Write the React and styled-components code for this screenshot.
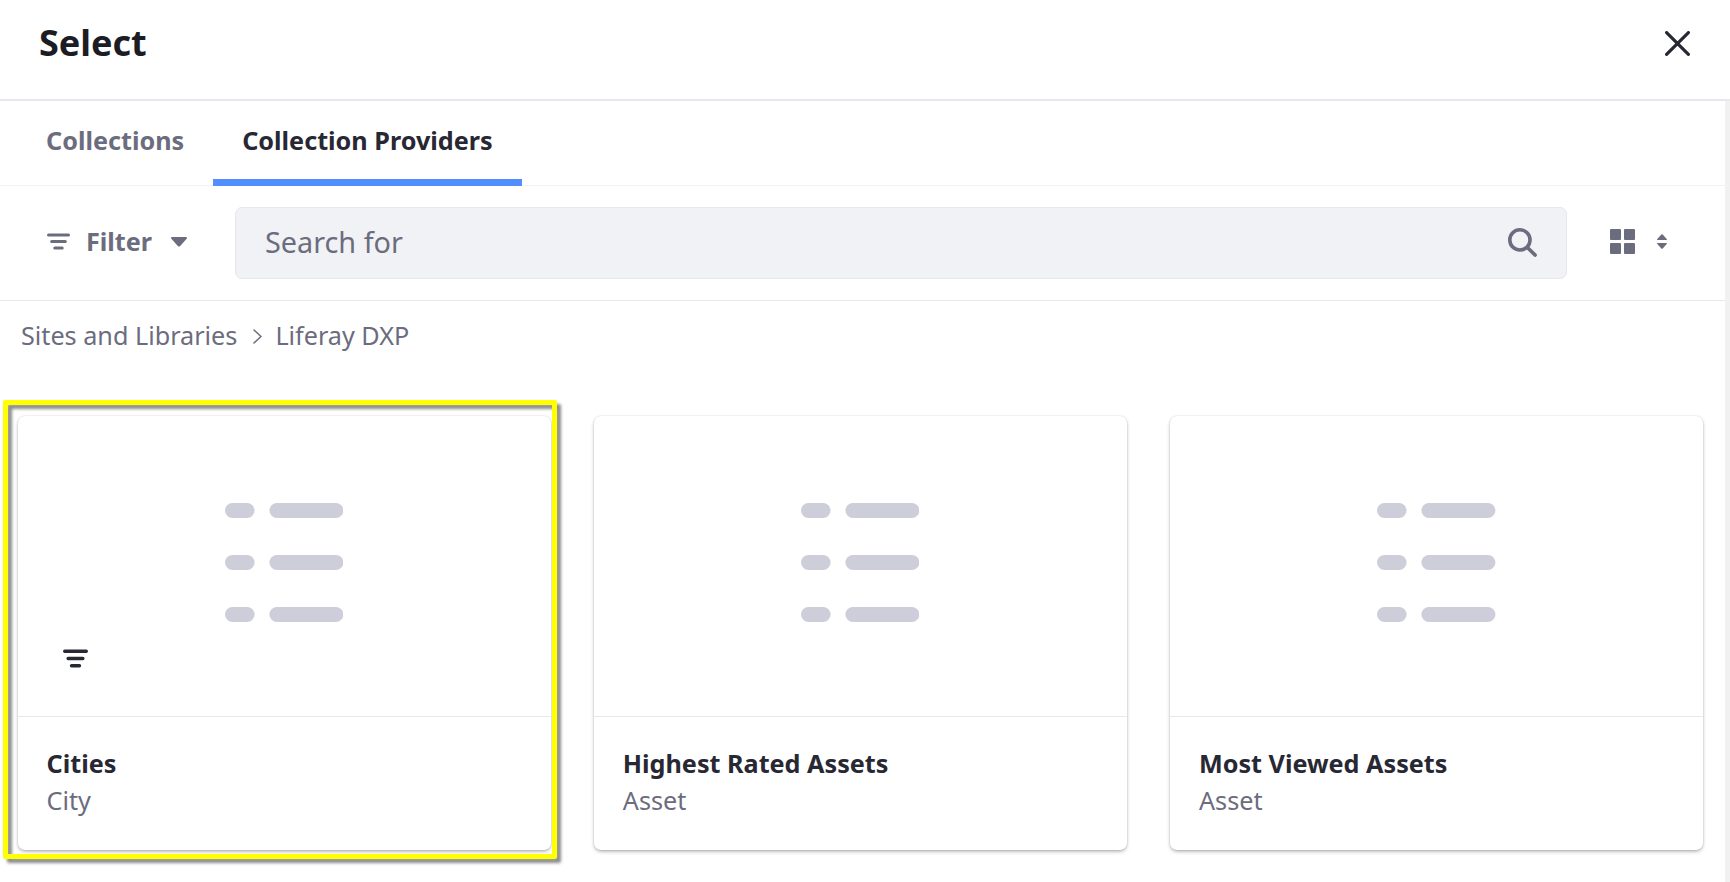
import React from "react";
import styled, { createGlobalStyle } from "styled-components";

const GlobalStyle = createGlobalStyle`
  * { box-sizing: border-box; }
  body { margin: 0; background: #fff; font-family: "Noto Sans", sans-serif; color: #272833; }
  svg { display: block; flex: none; }
`;

const Modal = styled.div`
  height: 882px;
  display: flex;
  flex-direction: column;
  overflow: hidden;
`;
const Header = styled.header`
  height: 101px;
  flex: none;
  display: flex;
  justify-content: space-between;
  padding: 0 40px 12px 39px;
  align-items: center;
  border-bottom: 2px solid #e7e7ed;
`;
const Title = styled.h1`
  margin: 0;
  padding-bottom: 2px;
  font-size: 36px;
  line-height: 48px;
  font-weight: 700;
  color: #1c1c24;
`;
const IconButton = styled.button`
  display: flex;
  align-items: center;
  padding: 0;
  border: 0;
  background: none;
  color: ${(p) => p.$color || "#6b6c7e"};
`;
const Body = styled.div`
  flex: 1;
  display: flex;
`;
const Content = styled.main`
  flex: 1;
  min-width: 0;
`;
const ScrollTrack = styled.div`
  width: 5px;
  background: #f1f1f1;
`;
const Tabs = styled.nav`
  display: flex;
  height: 85px;
  padding-left: 17px;
  border-bottom: 1px solid #f1f2f5;
`;
const Tab = styled.a`
  height: 85px;
  padding: 21px 29px 0;
  font-size: 25.2px;
  line-height: 36px;
  font-weight: 700;
  white-space: nowrap;
  color: ${(p) => (p.$active ? "#272833" : "#6b6c7e")};
  border-bottom: 7px solid ${(p) => (p.$active ? "#528eff" : "transparent")};
`;
const Toolbar = styled.div`
  display: flex;
  align-items: center;
  height: 115px;
  padding: 0 58px 0 47px;
  border-bottom: 1px solid #e7e7ed;
`;
const FilterButton = styled.button`
  display: flex;
  align-items: center;
  width: 188px;
  padding: 0 0 3px;
  border: 0;
  background: none;
  color: #6b6c7e;
  font: 700 25.2px/36px "Noto Sans", sans-serif;
`;
const FilterLabel = styled.span`
  margin: -2px 19px 0 16px;
`;
const SearchBox = styled.div`
  flex: 1;
  height: 72px;
  display: flex;
  align-items: center;
  justify-content: space-between;
  padding: 0 29px 2px;
  border: 1px solid #e7e7ed;
  border-radius: 7px;
  background: #f1f2f5;
  color: #6b6c7e;
  font-size: 28.8px;
`;
const Placeholder = styled.span`
  padding-bottom: 2px;
`;
const ViewControls = styled.div`
  display: flex;
  align-items: center;
  gap: 22px;
  margin-left: 43px;
  padding-bottom: 3px;
`;
const Breadcrumb = styled.div`
  display: flex;
  align-items: center;
  height: 115px;
  padding: 0 0 47px 21px;
  font-size: 25.2px;
  color: #6b6c7e;
`;
const Separator = styled.span`
  margin: 2px 13px 0 16px;
`;
const Cards = styled.div`
  display: grid;
  grid-template-columns: repeat(3, 533px);
  gap: 43.2px;
  padding-left: 17.6px;
`;
const Card = styled.article`
  position: relative;
  height: 434px;
  border-radius: 7px;
  background: #fff;
  box-shadow: 0 2px 4px -1px rgba(0, 0, 0, 0.38), 0 0 2px rgba(0, 0, 0, 0.14);
`;
const Preview = styled.div`
  height: 301px;
  display: flex;
  align-items: center;
  justify-content: center;
  padding-bottom: 7px;
  border-bottom: 1px solid #e7e7ed;
`;
const Badge = styled.span`
  position: absolute;
  left: 45px;
  top: 233px;
  color: #272833;
`;
const Caption = styled.div`
  padding: 28px 29px 0;
  font-size: 25.2px;
  line-height: 37px;
  color: #6b6c7e;
`;
const CardTitle = styled.div`
  font-weight: 700;
  color: #272833;
`;
const Highlight = styled.div`
  position: absolute;
  inset: -16px -6px -9px -15px;
  border: 5px solid #ff0;
  border-radius: 2px;
  filter: drop-shadow(4px 4px 1.5px rgba(0, 0, 0, 0.45));
  pointer-events: none;
`;

const FilterIcon = ({ width, height }) => (
  <svg width={width} height={height} viewBox="0 0 22 17" preserveAspectRatio="none" stroke="currentColor" strokeWidth="3" strokeLinecap="round">
    <path d="M1.5 2h19M4.5 8.5h13M7.5 15h7" />
  </svg>
);

const ListIcon = () => (
  <svg width="118.4" height="119" viewBox="0 0 118.4 119" fill="#cdced9">
    {[0, 52, 104].map((y) => (
      <React.Fragment key={y}>
        <rect x="0" y={y} width="29.6" height="15" rx="7.5" />
        <rect x="44.4" y={y} width="74" height="15" rx="7.5" />
      </React.Fragment>
    ))}
  </svg>
);

const items = [
  { title: "Cities", type: "City", selected: true },
  { title: "Highest Rated Assets", type: "Asset" },
  { title: "Most Viewed Assets", type: "Asset" },
];

export default function App() {
  return (
    <Modal>
      <GlobalStyle />
      <Header>
        <Title>Select</Title>
        <IconButton $color="#272833" aria-label="Close">
          <svg width="25" height="25" viewBox="0 0 25 25" stroke="currentColor" strokeWidth="3.2" strokeLinecap="round">
            <path d="M1.6 1.6l21.8 21.8M23.4 1.6L1.6 23.4" />
          </svg>
        </IconButton>
      </Header>
      <Body>
        <Content>
          <Tabs>
            <Tab>Collections</Tab>
            <Tab $active>Collection Providers</Tab>
          </Tabs>
          <Toolbar>
            <FilterButton>
              <FilterIcon width="23" height="17" />
              <FilterLabel>Filter</FilterLabel>
              <svg width="16" height="10" viewBox="0 0 16 10" fill="currentColor">
                <path d="M1 0h14q1.6.4.6 1.8L9.2 9q-1.2 1.2-2.4 0L.4 1.8Q-.6.4 1 0z" />
              </svg>
            </FilterButton>
            <SearchBox>
              <Placeholder>Search for</Placeholder>
              <IconButton aria-label="Search">
                <svg width="29" height="29" viewBox="0 0 29 29" fill="none" stroke="currentColor" strokeWidth="3.6" strokeLinecap="round">
                  <circle cx="11.9" cy="11.9" r="10.1" />
                  <path d="M19.4 19.4l7.7 7.7" />
                </svg>
              </IconButton>
            </SearchBox>
            <ViewControls>
              <svg width="25" height="25" viewBox="0 0 25 25" fill="#6b6c7e">
                <rect width="11" height="11" rx="1" />
                <rect x="14" width="11" height="11" rx="1" />
                <rect y="14" width="11" height="11" rx="1" />
                <rect x="14" y="14" width="11" height="11" rx="1" />
              </svg>
              <svg width="10" height="15" viewBox="0 0 10 15" fill="#6b6c7e">
                <path d="M.4 6Q-.2 5.700.3 5L4.300.6Q5 0 5.700.6L9.700 5q.5.700-.1 1zM.4 9h9.200q.6.3.1 1L5.700 14.400Q5 15 4.300 14.400L.3 10Q-.2 9.300.4 9z" />
              </svg>
            </ViewControls>
          </Toolbar>
          <Breadcrumb>
            <span>Sites and Libraries</span>
            <Separator>
              <svg width="9" height="15" viewBox="0 0 9 15" fill="none" stroke="currentColor" strokeWidth="1.5" strokeLinecap="round" strokeLinejoin="round">
                <path d="M1 1l7 6.500-7 6.500" />
              </svg>
            </Separator>
            <span>Liferay DXP</span>
          </Breadcrumb>
          <Cards>
            {items.map((item) => (
              <Card key={item.title}>
                <Preview>
                  <ListIcon />
                </Preview>
                {item.selected && (
                  <Badge>
                    <FilterIcon width="25" height="19" />
                  </Badge>
                )}
                <Caption>
                  <CardTitle>{item.title}</CardTitle>
                  <div>{item.type}</div>
                </Caption>
                {item.selected && <Highlight />}
              </Card>
            ))}
          </Cards>
        </Content>
        <ScrollTrack />
      </Body>
    </Modal>
  );
}
